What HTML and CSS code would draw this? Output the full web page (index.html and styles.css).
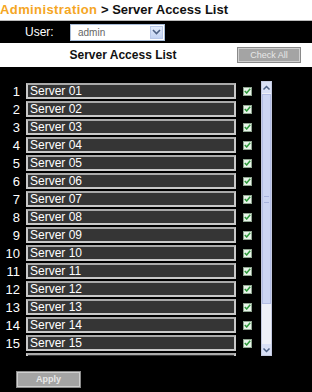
FILE: index.html
```html
<!DOCTYPE html>
<html>
<head>
<meta charset="utf-8">
<link rel="stylesheet" href="styles.css">
</head>
<body>
<div class="title"><span class="crumb">Administration</span> &gt; Server Access List</div>
<div class="userbar">
  <span class="ulabel">User:</span>
  <div class="select"><span class="sval">admin</span><span class="sarrow"><svg width="9" height="6" viewBox="0 0 9 6"><path d="M1 1 L4.5 4.5 L8 1" fill="none" stroke="#4d6185" stroke-width="1.6"/></svg></span></div>
</div>
<div class="sectionbar">
  <div class="stitle">Server Access List</div>
  <div class="btn checkall">Check All</div>
</div>
<div class="main">
  <div class="listwrap">
    <div class="list" id="list"></div>
    <div class="scrollbar">
      <div class="arrow"><svg width="9" height="6" viewBox="0 0 9 6"><path d="M1.5 4.5 L4.5 1.5 L7.5 4.5" fill="none" stroke="#4d6185" stroke-width="1.5"/></svg></div>
      <div class="track">
        <div class="thumb"><div class="grip"></div></div>
      </div>
      <div class="arrow"><svg width="9" height="6" viewBox="0 0 9 6"><path d="M1.5 1.5 L4.5 4.5 L7.5 1.5" fill="none" stroke="#4d6185" stroke-width="1.5"/></svg></div>
    </div>
  </div>
  <div class="btn apply">Apply</div>
</div>
<script>
var l=document.getElementById('list');var h='';
for(var i=1;i<=15;i++){var n=(i<10?'0':'')+i;
h+='<div class="row"><span class="num">'+i+'</span><span class="box">Server '+n+'</span><span class="cb"><svg width="7" height="6" viewBox="0 0 7 6"><path d="M0.8 3 L2.7 5 L6.2 0.8" fill="none" stroke="#2f9a3c" stroke-width="1.5"/></svg></span></div>';}
h+='<div class="row"><span class="num"></span><span class="box"></span></div>';
l.innerHTML=h;
</script>
</body>
</html>
```
FILE: styles.css
```css
html,body{margin:0;padding:0;}
body{background:#000;font-family:"Liberation Sans",Arial,sans-serif;width:312px;height:392px;overflow:hidden;}
.title{background:#fff;height:20px;line-height:20px;font-size:13px;font-weight:bold;color:#111;border-bottom:1px solid #bbb;white-space:nowrap;}
.crumb{color:#f5a623;letter-spacing:0.4px;}
.userbar{height:22px;display:flex;align-items:center;}
.ulabel{color:#fff;font-size:12px;margin-left:25px;width:45px;}
.select{width:93px;height:15px;background:#fff;border:1px solid #a7bcd8;display:flex;align-items:center;justify-content:space-between;}
.sval{color:#666;font-size:10px;margin-left:7px;}
.sarrow{width:13px;height:13px;margin-right:1px;background:linear-gradient(#e2ebfb,#c3d3f3);border:1px solid #b9c9ea;box-sizing:border-box;display:flex;align-items:center;justify-content:center;}
.sectionbar{background:#fff;height:24px;display:flex;align-items:center;}
.stitle{width:246px;text-align:center;font-size:12px;font-weight:bold;color:#111;}
.btn{background:#a4a4a4;border:1px solid #d0d0d0;box-shadow:0 0 0 1px #8a8a8a;color:#e8e8e8;font-size:9px;text-align:center;box-sizing:border-box;}
.checkall{width:62px;height:14px;line-height:12px;margin-left:-8px;}
.main{padding-top:14px;}
.listwrap{display:flex;height:275px;}
.list{width:258px;height:275px;overflow:hidden;padding-top:2px;box-sizing:border-box;}
.row{display:flex;align-items:center;height:16px;margin-bottom:2px;}
.num{width:20px;text-align:right;color:#fff;font-size:13px;}
.box{margin-left:6px;width:210px;height:16px;box-sizing:border-box;background:#353535;border:2px solid #c9c9c9;border-top-color:#aaa;color:#fff;font-size:12px;line-height:12px;padding-left:2px;}
.cb{margin-left:7px;width:9px;height:9px;box-sizing:border-box;background:#e9f4ea;border:1px solid #8fa590;display:flex;align-items:center;justify-content:center;}
.scrollbar{width:11px;margin-left:3px;height:275px;display:flex;flex-direction:column;background:#eef0f8;border:1px solid #c4cae0;box-sizing:border-box;}
.arrow{height:11px;display:flex;align-items:center;justify-content:center;background:#d9e0f6;}
.track{flex:1;padding:1px 0;}
.thumb{height:210px;background:#ccd5f3;border:1px solid #b3bde4;box-sizing:border-box;display:flex;align-items:center;justify-content:center;}
.grip{width:5px;height:5px;border-top:1px solid #a8b3de;border-bottom:1px solid #a8b3de;}
.apply{width:63px;height:15px;line-height:13px;margin-top:16px;margin-left:17px;font-weight:bold;}
```
